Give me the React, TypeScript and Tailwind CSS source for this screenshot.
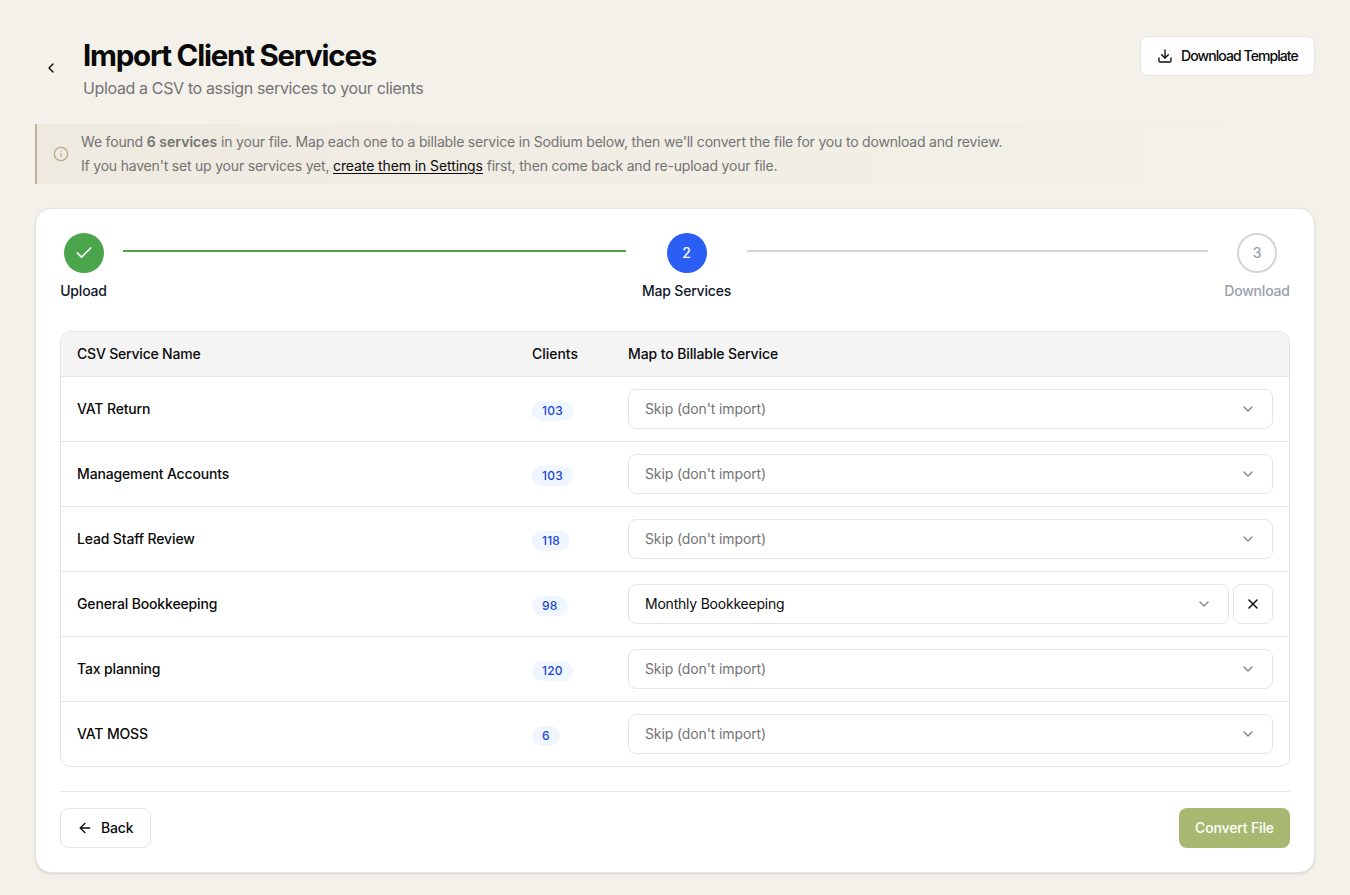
import React from "react";
import { ArrowLeft, Check, ChevronDown, ChevronLeft, Download, Info, X } from "lucide-react";

type Service = { name: string; clients: number; target?: string };

const services: Service[] = [
  { name: "VAT Return", clients: 103 },
  { name: "Management Accounts", clients: 103 },
  { name: "Lead Staff Review", clients: 118 },
  { name: "General Bookkeeping", clients: 98, target: "Monthly Bookkeeping" },
  { name: "Tax planning", clients: 120 },
  { name: "VAT MOSS", clients: 6 },
];

function Header() {
  return (
    <header className="flex items-start justify-between">
      <div className="flex items-center gap-4">
        <button className="flex size-8 items-center justify-center" aria-label="Go back">
          <ChevronLeft className="size-4" />
        </button>
        <div>
          <h1 className="pt-px text-[29.5px] leading-9 font-bold tracking-[-1.24px]">Import Client Services</h1>
          <p className="mt-[3px] text-base leading-6 tracking-[-0.36px] text-[#737373]">Upload a CSV to assign services to your clients</p>
        </div>
      </div>
      <button className="flex h-10 w-[175px] items-center gap-2 rounded-lg border border-[#e5e5e5] bg-white px-4 text-sm font-medium tracking-[-0.92px] whitespace-nowrap">
        <Download className="size-4 shrink-0" />
        Download Template
      </button>
    </header>
  );
}

function Notice() {
  return (
    <div className="mt-6 flex h-15 items-center gap-3 border-l-2 border-[#bfb398] bg-linear-to-r from-[#eeeae0] to-[#f4f1ea] pl-4">
      <Info className="size-4 text-[#b9ab8a]" strokeWidth={2} />
      <p className="text-sm leading-6 tracking-[-0.19px] text-[#737373]">
        We found <strong className="font-semibold tracking-[0.04px]">6 services</strong> in your file. Map each one to a billable service in Sodium below, then we'll convert the file for you to download and review.
        <br />
        <span className="tracking-[-0.2px]">If you haven't set up your services yet,{" "}</span>
        <a className="tracking-[-0.1px] text-[#0a0a0a] underline underline-offset-2">create them in Settings</a>
        <span className="tracking-[-0.18px]"> first, then come back and re-upload your file.</span>
      </p>
    </div>
  );
}

function Stepper() {
  return (
    <div className="flex items-start gap-4 text-sm font-medium tracking-[-0.19px] whitespace-nowrap text-[#101828]">
      <div className="flex w-[47px] flex-col items-center gap-2">
        <span className="flex size-10 items-center justify-center rounded-full bg-[#4aa54c] text-white">
          <Check className="size-5" />
        </span>
        Upload
      </div>
      <div className="mt-[17px] h-0.5 w-[503px] bg-[#4aa54c]" />
      <div className="flex w-[89px] flex-col items-center gap-2">
        <span className="flex size-10 items-center justify-center rounded-full bg-[#2b5ef5] text-white">2</span>
        Map Services
      </div>
      <div className="mt-[17px] h-0.5 flex-1 bg-[#d1d5dc]" />
      <div className="flex w-[66px] flex-col items-center gap-2 text-[#99a1af]">
        <span className="flex size-10 items-center justify-center rounded-full border-2 border-[#d1d5dc]">3</span>
        Download
      </div>
    </div>
  );
}

function ServiceRow({ service }: { service: Service }) {
  return (
    <div className="grid h-[65px] grid-cols-[455px_96px_1fr] items-center border-t border-[#e5e5e5] px-4">
      <span className="font-medium">{service.name}</span>
      <div className="flex pt-1">
        <span className="rounded-full bg-[#eff6ff] px-2.5 py-0.5 text-xs leading-4 font-medium tracking-[0.2px] text-[#1d45d8]">{service.clients}</span>
      </div>
      <div className="flex gap-1">
        <button className="flex h-10 flex-1 items-center justify-between rounded-lg border border-[#e5e5e5] px-4">
          {service.target ? (
            <span className="tracking-[-0.22px]">{service.target}</span>
          ) : (
            <span className="tracking-[-0.12px] text-[#737373]">Skip (don't import)</span>
          )}
          <ChevronDown className="size-4 text-[#858585]" />
        </button>
        {service.target && (
          <button className="flex size-10 items-center justify-center rounded-lg border border-[#e5e5e5]" aria-label="Clear">
            <X className="size-4" />
          </button>
        )}
      </div>
    </div>
  );
}

export default function App() {
  return (
    <div className="min-h-[895px] bg-[#f4f1ea] px-[35px] pt-9 pb-[22px] font-['Inter',sans-serif] text-[#0a0a0a]">
      <Header />
      <Notice />
      <main className="mt-6 h-[665px] rounded-2xl border border-[#e5e5e5] bg-white p-6 shadow-sm">
        <Stepper />
        <div className="mt-[30px] overflow-hidden rounded-[10px] border border-[#e5e5e5] text-sm tracking-[-0.15px]">
          <div className="grid h-11 grid-cols-[455px_96px_1fr] items-center bg-[#f4f4f4] px-4 font-medium">
            <span className="tracking-[-0.2px]">CSV Service Name</span>
            <span className="tracking-[-0.03px]">Clients</span>
            <span className="tracking-[-0.11px]">Map to Billable Service</span>
          </div>
          {services.map((service) => (
            <ServiceRow key={service.name} service={service} />
          ))}
        </div>
        <div className="mt-6 flex justify-between border-t border-[#e5e5e5] pt-4 text-sm font-medium tracking-[-0.15px]">
          <button className="flex h-10 w-[91px] items-center gap-2 rounded-lg border border-[#e5e5e5] px-4">
            <ArrowLeft className="size-4" />
            Back
          </button>
          <button className="h-10 w-[111px] rounded-lg bg-[#a7b870] text-white">Convert File</button>
        </div>
      </main>
    </div>
  );
}
